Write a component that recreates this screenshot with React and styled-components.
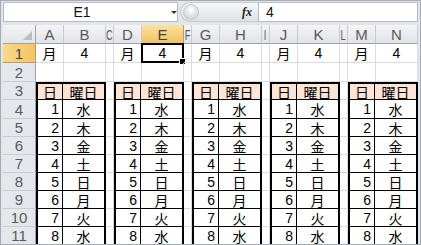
import React from 'react';
import styled, { createGlobalStyle } from 'styled-components';

const GlobalStyle = createGlobalStyle`
  html, body { margin: 0; padding: 0; background: #fff; }
  body { font-family: "Liberation Sans", "Noto Sans CJK JP", sans-serif; }
`;

const COLUMNS = ['A', 'B', 'C', 'D', 'E', 'F', 'G', 'H', 'I', 'J', 'K', 'L', 'M', 'N'];
const ROWS = [1, 2, 3, 4, 5, 6, 7, 8, 9, 10, 11];
const DAYS = ['水', '木', '金', '土', '日', '月', '火', '水'];
// start column index of the five little tables: A, D, G, J, M
const TABLE_STARTS = [0, 3, 6, 9, 12];

const Window = styled.div`
  width: 421px;
  height: 245px;
  box-sizing: border-box;
  border: 1px solid #a3abb5;
  background: #e2e6eb;
  padding: 1px 2px 0 2px;
  display: flex;
  flex-direction: column;
  overflow: hidden;
`;

const FormulaBar = styled.div`
  height: 20px;
  display: flex;
  flex-shrink: 0;
`;

const NameBox = styled.div`
  width: 175px;
  box-sizing: border-box;
  background: #fff;
  border: 1px solid #b4bcc6;
  display: flex;
  align-items: center;
`;

const NameText = styled.div`
  width: 156px;
  text-align: center;
  font-size: 14px;
  color: #111;
`;

const DropArrow = styled.div`
  width: 0;
  height: 0;
  border-left: 3px solid transparent;
  border-right: 3px solid transparent;
  border-top: 3px solid #333;
  margin-left: 11px;
`;

const FxPill = styled.div`
  width: 78px;
  margin-left: 2px;
  box-sizing: border-box;
  border-radius: 10px 0 0 10px;
  background: linear-gradient(#f7f8fa, #dde1e6);
  border: 1px solid #c4cad2;
  border-right: none;
  display: flex;
  align-items: center;
  justify-content: space-between;
  padding: 0 6px 0 2px;
`;

const RoundButton = styled.div`
  width: 14px;
  height: 14px;
  border-radius: 50%;
  background: radial-gradient(circle at 50% 35%, #ffffff, #d3d8de 70%);
  border: 1px solid #c3c9d0;
`;

const FxLabel = styled.span`
  font-family: "Liberation Serif", serif;
  font-style: italic;
  font-weight: bold;
  font-size: 12px;
  color: #222;
`;

const FormulaInput = styled.div`
  flex: 1;
  background: #fff;
  border: 1px solid #b4bcc6;
  display: flex;
  align-items: center;
  padding-left: 7px;
  font-size: 14px;
  color: #111;
`;

const Viewport = styled.div`
  flex: 1;
  margin-top: 3px;
  overflow: hidden;
  background: #fff;
`;

const Sheet = styled.div`
  display: grid;
  grid-template-columns: 33px repeat(4, 28px 42px 8px) 28px 42px;
  grid-template-rows: 19px 19px 19px 18px 19px repeat(7, 18px);
  font-family: "Liberation Sans", "Noto Sans CJK JP", sans-serif;
  font-size: 14px;
  color: #000;
`;

const Corner = styled.div`
  grid-column: 1;
  grid-row: 1;
  box-sizing: border-box;
  background: linear-gradient(#f3f4f6, #e1e4e8);
  border-right: 1px solid #9aa3ae;
  border-bottom: 1px solid #9aa3ae;
  display: flex;
  align-items: flex-end;
  justify-content: flex-end;
  padding: 0 3px 3px 0;
`;

const CornerMark = styled.div`
  width: 0;
  height: 0;
  border-left: 9px solid transparent;
  border-bottom: 9px solid #b8bec6;
`;

const ColHeader = styled.div`
  grid-row: 1;
  box-sizing: border-box;
  display: flex;
  align-items: center;
  justify-content: center;
  font-size: 15px;
  color: ${p => (p.$active ? '#444' : '#5a5a5a')};
  background: ${p =>
    p.$active ? 'linear-gradient(#fae1a4, #f2c35e)' : 'linear-gradient(#f3f4f6, #e1e4e8)'};
  border-right: 1px solid ${p => (p.$active ? '#c59d4d' : '#c7ccd3')};
  border-bottom: 1px solid ${p => (p.$active ? '#c59d4d' : '#9aa3ae')};
`;

// narrow gap columns squeeze their letter, as the sheet does
const HeaderLetter = styled.span`
  display: inline-block;
  transform: ${p => (p.$narrow ? 'scaleX(0.62)' : 'none')};
`;

const RowHeader = styled.div`
  grid-column: 1;
  box-sizing: border-box;
  display: flex;
  align-items: center;
  justify-content: center;
  font-size: 15px;
  color: ${p => (p.$active ? '#444' : '#5a5a5a')};
  background: ${p => (p.$active ? 'linear-gradient(90deg, #f8d98f, #f3c462)' : '#e4e7eb')};
  border-right: 1px solid ${p => (p.$active ? '#c59d4d' : '#9aa3ae')};
  border-bottom: 1px solid ${p => (p.$active ? '#c59d4d' : '#c9ced5')};
`;

const Cell = styled.div`
  box-sizing: border-box;
  position: relative;
  display: flex;
  align-items: center;
  justify-content: center;
  border-right: 1px solid #dadcdf;
  border-bottom: 1px solid #dadcdf;
`;

const Selection = styled.div`
  position: absolute;
  left: -1px;
  top: -1px;
  right: -1px;
  bottom: -1px;
  border: 2px solid #000;
  pointer-events: none;
`;

const FillHandle = styled.div`
  position: absolute;
  right: -4px;
  bottom: -4px;
  width: 5px;
  height: 5px;
  background: #000;
  border: 1px solid #fff;
`;

const Table = styled.div`
  box-sizing: border-box;
  border: 2px solid #000;
  border-bottom: none;
  display: grid;
  grid-template-columns: 25px 1fr;
  grid-template-rows: 16px 19px repeat(7, 18px);
  background: #fff;
`;

const TCell = styled.div`
  box-sizing: border-box;
  display: flex;
  align-items: center;
  justify-content: ${p => (p.$num ? 'flex-end' : 'center')};
  padding-right: ${p => (p.$num ? '3px' : '0')};
  background: ${p => (p.$head ? '#fce4d6' : '#fff')};
  border-bottom: 1px solid #000;
  border-right: ${p => (p.$left ? '1px solid #000' : 'none')};
`;

const isNarrow = i => i % 3 === 2;

export default function App() {
  const activeCol = 4; // E
  const activeRow = 1;

  const row1 = COLUMNS.map((c, i) => {
    const value = isNarrow(i) ? '' : i % 3 === 0 ? '月' : '4';
    return (
      <Cell key={'r1' + c} style={{ gridColumn: i + 2, gridRow: 2 }}>
        {value}
        {i === activeCol && (
          <Selection>
            <FillHandle />
          </Selection>
        )}
      </Cell>
    );
  });

  const row2 = COLUMNS.map((c, i) => (
    <Cell key={'r2' + c} style={{ gridColumn: i + 2, gridRow: 3 }} />
  ));

  const gaps = [];
  COLUMNS.forEach((c, i) => {
    if (!isNarrow(i)) return;
    for (let r = 3; r <= 11; r++) {
      gaps.push(<Cell key={c + r} style={{ gridColumn: i + 2, gridRow: r + 1 }} />);
    }
  });

  return (
    <Window>
      <GlobalStyle />
      <FormulaBar>
        <NameBox>
          <NameText>E1</NameText>
          <DropArrow />
        </NameBox>
        <FxPill>
          <RoundButton />
          <FxLabel>fx</FxLabel>
        </FxPill>
        <FormulaInput>4</FormulaInput>
      </FormulaBar>
      <Viewport>
        <Sheet>
          <Corner>
            <CornerMark />
          </Corner>
          {COLUMNS.map((c, i) => (
            <ColHeader key={c} $active={i === activeCol} style={{ gridColumn: i + 2 }}>
              <HeaderLetter $narrow={isNarrow(i)}>{c}</HeaderLetter>
            </ColHeader>
          ))}
          {ROWS.map(r => (
            <RowHeader key={r} $active={r === activeRow} style={{ gridRow: r + 1 }}>
              {r}
            </RowHeader>
          ))}
          {row1}
          {row2}
          {gaps}
          {TABLE_STARTS.map(s => (
            <Table key={s} style={{ gridColumn: `${s + 2} / span 2`, gridRow: '4 / span 9' }}>
              <TCell $head $left>日</TCell>
              <TCell $head>曜日</TCell>
              {DAYS.map((d, n) => (
                <React.Fragment key={n}>
                  <TCell $num $left>{n + 1}</TCell>
                  <TCell>{d}</TCell>
                </React.Fragment>
              ))}
            </Table>
          ))}
        </Sheet>
      </Viewport>
    </Window>
  );
}
